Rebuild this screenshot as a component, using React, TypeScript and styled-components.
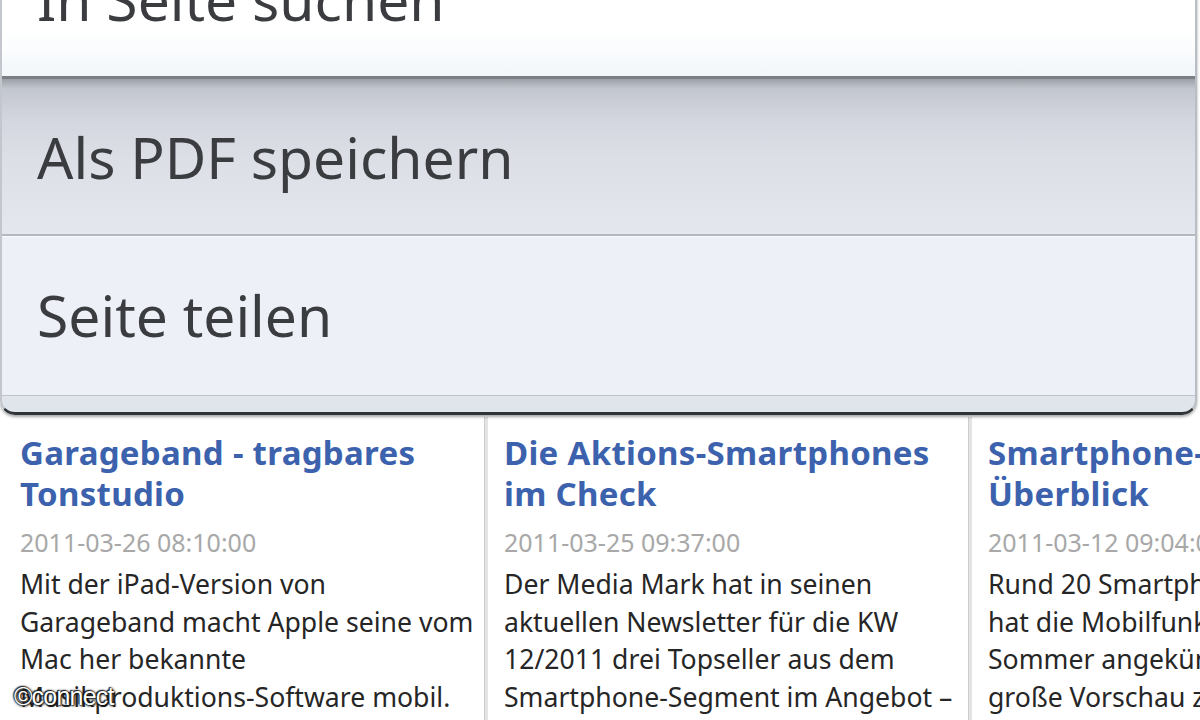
import React from "react";
import styled, { createGlobalStyle, css } from "styled-components";

const GlobalStyle = createGlobalStyle`
  html, body {
    margin: 0;
    padding: 0;
    background: #ffffff;
  }
  body {
    font-family: "Noto Sans", "Open Sans", "DejaVu Sans", sans-serif;
    -webkit-font-smoothing: antialiased;
  }
`;

const Screen = styled.div`
  position: relative;
  width: 1200px;
  height: 720px;
  overflow: hidden;
  background: #ffffff;
`;

const Menu = styled.ul`
  position: relative;
  z-index: 1;
  list-style: none;
  margin: -78px 3px 0 0;
  padding: 0 0 16px 0;
  background: linear-gradient(#e9eef4, #e0e5ec);
  border-left: 2px solid #c3c7cd;
  border-right: 2px solid #b9bdc4;
  border-bottom: 3px solid #2f3439;
  border-radius: 0 0 15px 15px;
  box-shadow: 0 2px 3px rgba(0, 0, 0, 0.35);
`;

type Variant = "top" | "pressed" | "plain";

const variants = {
  top: css`
    height: 157px;
    background: linear-gradient(#ffffff 70%, #f3f7fa);
    border-bottom: 3px solid #7c8086;
  `,
  pressed: css`
    height: 157px;
    background: linear-gradient(
      #9ca0a7 0px,
      #c3c7cf 10px,
      #d3d6de 40px,
      #dddfe7 80px,
      #e4e7ee 155px
    );
    border-bottom: 2px solid #b3b7be;
  `,
  plain: css`
    height: 160px;
    padding-bottom: 3px;
    background: #edf1f7;
    border-top: 1px solid #f9fafc;
    border-bottom: 1px solid #bfc3c9;
  `,
};

const MenuItem = styled.li<{ $variant: Variant }>`
  display: flex;
  align-items: center;
  box-sizing: border-box;
  padding-left: 35px;
  font-size: 57px;
  color: #3b3c40;
  white-space: nowrap;
  ${(p) => variants[p.$variant]}
`;

const Cards = styled.div`
  display: grid;
  grid-template-columns: repeat(3, 484px);
  margin: 2px 0 0 4px;
`;

const Card = styled.article`
  box-sizing: border-box;
  height: 320px;
  padding: 15px 16px 0 16px;
  background: #ffffff;
  border-right: 3px solid #e4e4e4;
  box-shadow: inset -1px 0 0 #cdcdcd;
`;

const Title = styled.h2`
  margin: 0;
  font-size: 33px;
  font-weight: 700;
  line-height: 41px;
  letter-spacing: 0.3px;
  color: #3d62ad;
  white-space: nowrap;
`;

const Line = styled.span`
  display: block;
`;

const Date = styled.div`
  margin-top: 10px;
  font-size: 25px;
  line-height: 36px;
  color: #a8a8a8;
  white-space: nowrap;
`;

const Body = styled.p`
  margin: 6px 0 0 0;
  font-size: 26.6px;
  line-height: 37.5px;
  color: #262626;
  white-space: nowrap;
`;

const Watermark = styled.div`
  position: absolute;
  left: 14px;
  bottom: 9px;
  z-index: 2;
  font-family: "Liberation Sans", Arial, sans-serif;
  font-size: 25px;
  letter-spacing: -0.8px;
  color: #ffffff;
  text-shadow: 0 0 2px #000, 0 0 3px #111, 1px 1px 2px #222, -1px -1px 1px #333;
`;

const menu: { label: string; variant: Variant }[] = [
  { label: "In Seite suchen", variant: "top" },
  { label: "Als PDF speichern", variant: "pressed" },
  { label: "Seite teilen", variant: "plain" },
];

const articles = [
  {
    title: ["Garageband - tragbares", "Tonstudio"],
    date: "2011-03-26 08:10:00",
    body: [
      "Mit der iPad-Version von",
      "Garageband macht Apple seine vom",
      "Mac her bekannte",
      "Musikproduktions-Software mobil.",
    ],
  },
  {
    title: ["Die Aktions-Smartphones", "im Check"],
    date: "2011-03-25 09:37:00",
    body: [
      "Der Media Mark hat in seinen",
      "aktuellen Newsletter für die KW",
      "12/2011 drei Topseller aus dem",
      "Smartphone-Segment im Angebot –",
    ],
  },
  {
    title: ["Smartphone-Vorschau im", "Überblick"],
    date: "2011-03-12 09:04:00",
    body: [
      "Rund 20 Smartphones",
      "hat die Mobilfunkbranche für den",
      "Sommer angekündigt – die",
      "große Vorschau zeigt alle Modelle.",
    ],
  },
];

export default function App() {
  return (
    <Screen>
      <GlobalStyle />
      <Menu>
        {menu.map((m) => (
          <MenuItem key={m.label} $variant={m.variant}>
            {m.label}
          </MenuItem>
        ))}
      </Menu>
      <Cards>
        {articles.map((a) => (
          <Card key={a.date}>
            <Title>
              {a.title.map((t) => (
                <Line key={t}>{t}</Line>
              ))}
            </Title>
            <Date>{a.date}</Date>
            <Body>
              {a.body.map((b) => (
                <Line key={b}>{b}</Line>
              ))}
            </Body>
          </Card>
        ))}
      </Cards>
      <Watermark>©connect</Watermark>
    </Screen>
  );
}
